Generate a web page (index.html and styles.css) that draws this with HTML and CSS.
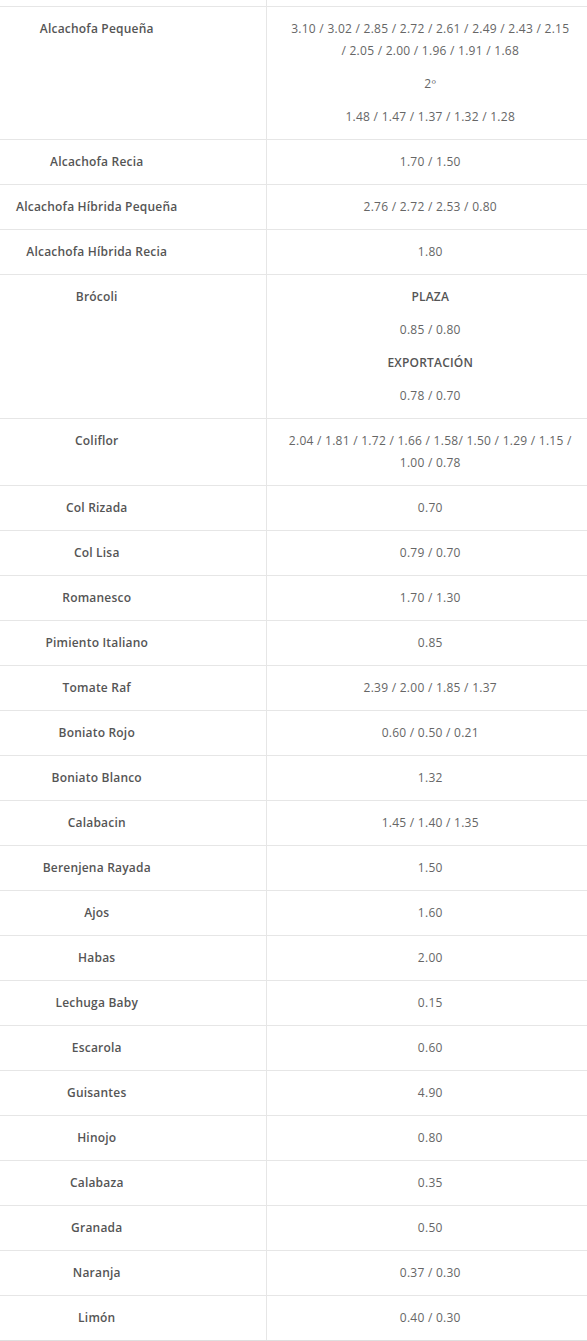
FILE: index.html
```html
<!DOCTYPE html>
<html lang="es">
<head>
<meta charset="utf-8">
<title>Precios</title>
<link rel="stylesheet" href="styles.css">
</head>
<body>
<div class="crop">
<table class="prices">
<tbody>
<tr class="stub"><td class="name"></td><td class="val"></td></tr>
<tr><td class="name">Alcachofa Pequeña</td><td class="val"><p>3.10 / 3.02 / 2.85 / 2.72 / 2.61 / 2.49 / 2.43 / 2.15 /&nbsp;2.05 / 2.00 / 1.96 / 1.91 / 1.68</p><p>2º</p><p>1.48 / 1.47 / 1.37 / 1.32 / 1.28</p></td></tr>
<tr><td class="name">Alcachofa Recia</td><td class="val">1.70 / 1.50</td></tr>
<tr><td class="name">Alcachofa Híbrida Pequeña</td><td class="val">2.76 / 2.72 / 2.53 / 0.80</td></tr>
<tr><td class="name">Alcachofa Híbrida Recia</td><td class="val">1.80</td></tr>
<tr><td class="name">Brócoli</td><td class="val"><p class="label">PLAZA</p><p>0.85 / 0.80</p><p class="label">EXPORTACIÓN</p><p>0.78 / 0.70</p></td></tr>
<tr><td class="name">Coliflor</td><td class="val">2.04 / 1.81 / 1.72 / 1.66 / 1.58/ 1.50 / 1.29 / 1.15 / 1.00 / 0.78</td></tr>
<tr><td class="name">Col Rizada</td><td class="val">0.70</td></tr>
<tr><td class="name">Col Lisa</td><td class="val">0.79 / 0.70</td></tr>
<tr><td class="name">Romanesco</td><td class="val">1.70 / 1.30</td></tr>
<tr><td class="name">Pimiento Italiano</td><td class="val">0.85</td></tr>
<tr><td class="name">Tomate Raf</td><td class="val">2.39 / 2.00 / 1.85 / 1.37</td></tr>
<tr><td class="name">Boniato Rojo</td><td class="val">0.60 / 0.50 / 0.21</td></tr>
<tr><td class="name">Boniato Blanco</td><td class="val">1.32</td></tr>
<tr><td class="name">Calabacin</td><td class="val">1.45 / 1.40 / 1.35</td></tr>
<tr><td class="name">Berenjena Rayada</td><td class="val">1.50</td></tr>
<tr><td class="name">Ajos</td><td class="val">1.60</td></tr>
<tr><td class="name">Habas</td><td class="val">2.00</td></tr>
<tr><td class="name">Lechuga Baby</td><td class="val">0.15</td></tr>
<tr><td class="name">Escarola</td><td class="val">0.60</td></tr>
<tr><td class="name">Guisantes</td><td class="val">4.90</td></tr>
<tr><td class="name">Hinojo</td><td class="val">0.80</td></tr>
<tr><td class="name">Calabaza</td><td class="val">0.35</td></tr>
<tr><td class="name">Granada</td><td class="val">0.50</td></tr>
<tr><td class="name">Naranja</td><td class="val">0.37 / 0.30</td></tr>
<tr><td class="name">Limón</td><td class="val">0.40 / 0.30</td></tr>
</tbody>
</table>
</div>
</body>
</html>
```

FILE: styles.css
```css
html, body {
  margin: 0;
  padding: 0;
  background: #fff;
}

.crop {
  width: 587px;
  overflow: hidden;
}

.prices {
  margin-left: -72px;
  width: 666px;
  border-collapse: collapse;
  table-layout: fixed;
  font-family: "Open Sans", "Liberation Sans", sans-serif;
  font-size: 12px;
  line-height: 22px;
  border-bottom: 2px solid #dedede;
}

.prices td {
  border-top: 1px solid #e6e6e6;
  text-align: center;
  vertical-align: top;
  padding: 11px 10px;
}

.prices td.name {
  width: 338px;
  box-sizing: border-box;
  color: #555;
  font-weight: 600;
  letter-spacing: 0.2px;
  border-right: 1px solid #e6e6e6;
}

.prices td.val {
  color: #666;
  letter-spacing: 0.26px;
  padding-left: 17px;
  padding-right: 17px;
}

.prices tr.stub td {
  border-top: 0;
  padding: 0;
  height: 6px;
}

.val p {
  margin: 0 0 11px;
}

.val p:last-child {
  margin-bottom: 0;
}

.val p.label {
  color: #555;
  font-weight: 600;
  letter-spacing: 0.2px;
}
```
